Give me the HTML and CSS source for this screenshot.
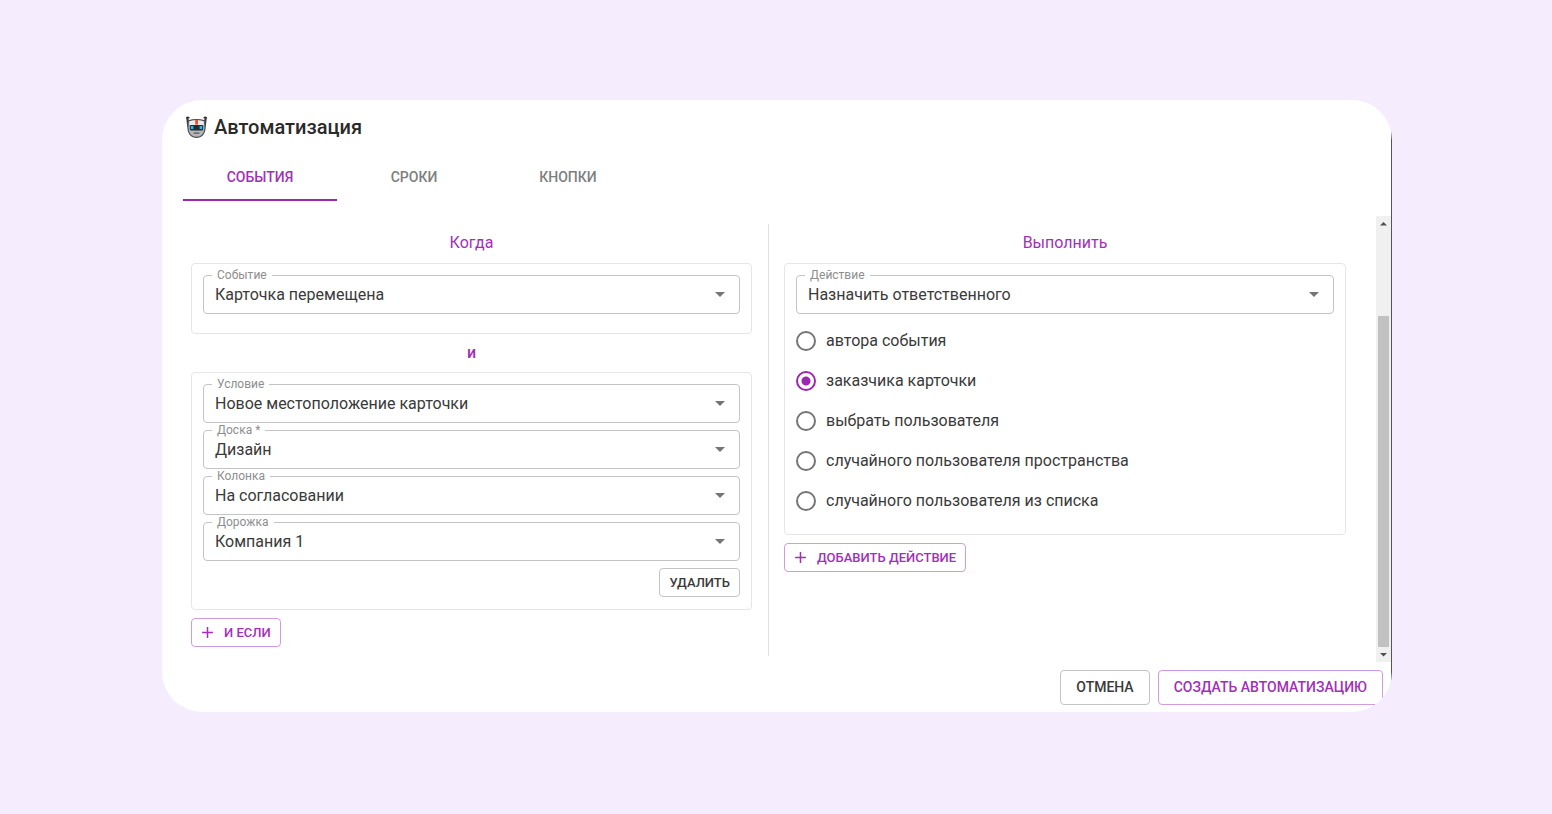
FILE: index.html
```html
<!DOCTYPE html>
<html lang="ru">
<head>
<meta charset="utf-8">
<meta name="viewport" content="width=device-width, initial-scale=1">
<title>Автоматизация</title>
<link rel="stylesheet" href="styles.css">
</head>
<body>
<main class="dialog">
  <div class="dialog-inner">
    <header class="title">
      <svg class="robot" viewBox="0 0 24 24" aria-hidden="true">
        <path d="M2.500 3L3.500 11M21.500 3L20.500 11" stroke="#3d3d40" stroke-width="2.400" stroke-linecap="round"/>
        <path d="M0.800 2.800a2.100 1.700 0 0 1 4.200 0zM19 2.800a2.100 1.700 0 0 1 4.200 0z" fill="#333"/>
        <path d="M3.500 5.500Q12 3 20.500 5.500L21 12Q20.800 18 17.800 20.800Q12 25 6.200 20.800Q3.200 18 3 12Z" fill="#b4b6b8" stroke="#48494b" stroke-width="1.200"/>
        <path d="M4.500 6Q12 4 19.500 6V10H4.500Z" fill="#ececec"/>
        <rect x="10.700" y="4.500" width="2.800" height="5" fill="#f4482a"/>
        <rect x="5" y="9.800" width="14" height="5.800" rx="1.200" fill="#252b31"/>
        <rect x="6" y="11" width="2.800" height="3.200" fill="#29b4e8"/>
        <rect x="15.200" y="11" width="2.800" height="3.200" fill="#29b4e8"/>
        <path d="M9 18.400h6" stroke="#55575a" stroke-width="1.300"/>
      </svg>
      <h1>Автоматизация</h1>
    </header>

    <nav class="tabs" role="tablist">
      <button class="tab tab-active" type="button" role="tab" aria-selected="true">СОБЫТИЯ</button>
      <button class="tab" type="button" role="tab" aria-selected="false">СРОКИ</button>
      <button class="tab" type="button" role="tab" aria-selected="false">КНОПКИ</button>
    </nav>

    <div class="body">
      <div class="columns">
        <section class="column">
          <h2>Когда</h2>
          <div class="panel panel-event">
            <div class="field">
              <label for="event">Событие</label>
              <select id="event"><option>Карточка перемещена</option></select>
            </div>
          </div>
          <p class="joiner">и</p>
          <div class="panel">
            <div class="field">
              <label for="condition">Условие</label>
              <select id="condition"><option>Новое местоположение карточки</option></select>
            </div>
            <div class="field">
              <label for="board">Доска *</label>
              <select id="board"><option>Дизайн</option></select>
            </div>
            <div class="field">
              <label for="lane-column">Колонка</label>
              <select id="lane-column"><option>На согласовании</option></select>
            </div>
            <div class="field">
              <label for="lane">Дорожка</label>
              <select id="lane"><option>Компания 1</option></select>
            </div>
            <button class="btn btn-small btn-delete" type="button">УДАЛИТЬ</button>
          </div>
          <button class="btn btn-small btn-accent btn-add" type="button">
            <svg class="plus" viewBox="0 0 12 12" aria-hidden="true"><path d="M6 1v10M1 6h10"/></svg>
            И ЕСЛИ
          </button>
        </section>

        <section class="column column-action">
          <h2>Выполнить</h2>
          <div class="panel panel-action">
            <div class="field">
              <label for="action">Действие</label>
              <select id="action"><option>Назначить ответственного</option></select>
            </div>
            <div class="radios" role="radiogroup">
              <label class="radio"><input type="radio" name="who">автора события</label>
              <label class="radio"><input type="radio" name="who" checked>заказчика карточки</label>
              <label class="radio"><input type="radio" name="who">выбрать пользователя</label>
              <label class="radio"><input type="radio" name="who">случайного пользователя пространства</label>
              <label class="radio"><input type="radio" name="who">случайного пользователя из списка</label>
            </div>
          </div>
          <button class="btn btn-small btn-accent btn-add" type="button">
            <svg class="plus" viewBox="0 0 12 12" aria-hidden="true"><path d="M6 1v10M1 6h10"/></svg>
            ДОБАВИТЬ ДЕЙСТВИЕ
          </button>
        </section>
      </div>

      <div class="scrollbar" aria-hidden="true">
        <svg class="scroll-arrow" viewBox="0 0 15 15"><path d="M4 9.500L7.500 6L11 9.500Z"/></svg>
        <div class="scroll-space"></div>
        <div class="scroll-thumb"></div>
        <svg class="scroll-arrow" viewBox="0 0 15 15"><path d="M4 6L7.500 9.500L11 6Z"/></svg>
      </div>
    </div>

    <footer class="footer">
      <button class="btn" type="button">ОТМЕНА</button>
      <button class="btn btn-accent" type="button">СОЗДАТЬ АВТОМАТИЗАЦИЮ</button>
    </footer>
  </div>
</main>
</body>
</html>
```

FILE: styles.css
```css
* {
  box-sizing: border-box;
}

body {
  margin: 0;
  padding: 100px 160px 100px 162px;
  background: #f5ecfe;
  color: #3a3a3a;
  font: 16px/24px Roboto, sans-serif;
}

button,
select {
  font: inherit;
  color: inherit;
}

.dialog {
  border-radius: 40px;
  background: #fff;
  overflow: hidden;
}

.dialog-inner {
  border-right: 1px solid #555;
}

.title {
  display: flex;
  align-items: center;
  gap: 6px;
  padding: 11px 24px 9px 23px;
}

.robot {
  width: 23px;
  height: 24px;
  fill: none;
}

.title h1 {
  margin: 0;
  color: #2a2a2a;
  font-size: 20px;
  line-height: 32px;
  font-weight: 500;
}

.tabs {
  display: flex;
  padding-left: 21px;
}

.tab {
  width: 154px;
  height: 49px;
  padding: 2px 0 0;
  border: 0;
  border-bottom: 2px solid transparent;
  background: none;
  color: #7e7e7e;
  font-size: 14px;
  font-weight: 500;
}

.tab-active {
  border-color: #9c27b0;
  color: #a32fb8;
}

.body {
  display: flex;
  padding-top: 15px;
}

.columns {
  flex: 1;
  display: grid;
  grid-template-columns: 1fr 1fr;
  padding: 8px 23px 6px 21px;
}

.column {
  padding: 4px 16px 9px 8px;
}

.column-action {
  padding: 4px 7px 9px 15px;
  border-left: 1px solid #e0e0e0;
}

.column h2,
.joiner {
  margin: 0;
  color: #a32fb8;
  font-size: 16px;
  font-weight: 400;
  line-height: 30px;
  text-align: center;
}

.column h2 {
  margin-bottom: 5px;
}

.joiner {
  line-height: 38px;
  font-weight: 500;
}

.panel {
  display: flex;
  flex-direction: column;
  gap: 7px;
  padding: 11px 11px 12px;
  border: 1px solid #e6e6e6;
  border-radius: 4px;
}

.panel-event {
  padding-bottom: 19px;
}

.field {
  position: relative;
}

.field label {
  position: absolute;
  top: -7px;
  left: 9px;
  padding: 0 5px;
  background: #fff;
  color: #8e8e8e;
  font-size: 12px;
  line-height: 14px;
}

.field select {
  display: block;
  width: 100%;
  height: 39px;
  padding: 0 40px 0 11px;
  border: 1px solid #c4c4c4;
  border-radius: 4px;
  appearance: none;
  background: #fff;
}

.field::after {
  content: "";
  position: absolute;
  top: 17px;
  right: 15px;
  border: 5px solid transparent;
  border-top-color: #757575;
  border-bottom: 0;
  pointer-events: none;
}

.btn {
  height: 35px;
  padding: 0 15px 2px;
  border: 1px solid #c4c4c4;
  border-radius: 4px;
  background: #fff;
  font-size: 14px;
  font-weight: 500;
}

.btn-accent {
  border-color: #d29bdc;
  color: #a32fb8;
}

.btn-small {
  height: 29px;
  padding: 0 9px;
  font-size: 13px;
}

.btn-delete {
  align-self: flex-end;
}

.btn-add {
  display: flex;
  align-items: center;
  gap: 10px;
  margin-top: 8px;
}

.plus {
  width: 13px;
  height: 13px;
  fill: none;
  stroke: currentColor;
  stroke-width: 1.4;
}

.radio {
  display: flex;
  align-items: center;
  gap: 10px;
  height: 40px;
}

.radios {
  padding-bottom: 1px;
}

.radio input {
  width: 20px;
  height: 20px;
  margin: 0;
  border: 2px solid #757575;
  border-radius: 50%;
  appearance: none;
}

.radio input:checked {
  border-color: #9c27b0;
  background: radial-gradient(circle, #9c27b0 0 4px, transparent 5px);
}

.scrollbar {
  display: flex;
  flex-direction: column;
  width: 15px;
  background: #f0f0f0;
}

.scroll-arrow {
  width: 15px;
  height: 15px;
  fill: #505050;
}

.scroll-space {
  flex: 85;
}

.scroll-thumb {
  flex: 330;
  margin: 0 2px;
  background: #c1c1c1;
}

.footer {
  display: flex;
  justify-content: flex-end;
  gap: 8px;
  padding: 8px 8px 7px;
}
```
